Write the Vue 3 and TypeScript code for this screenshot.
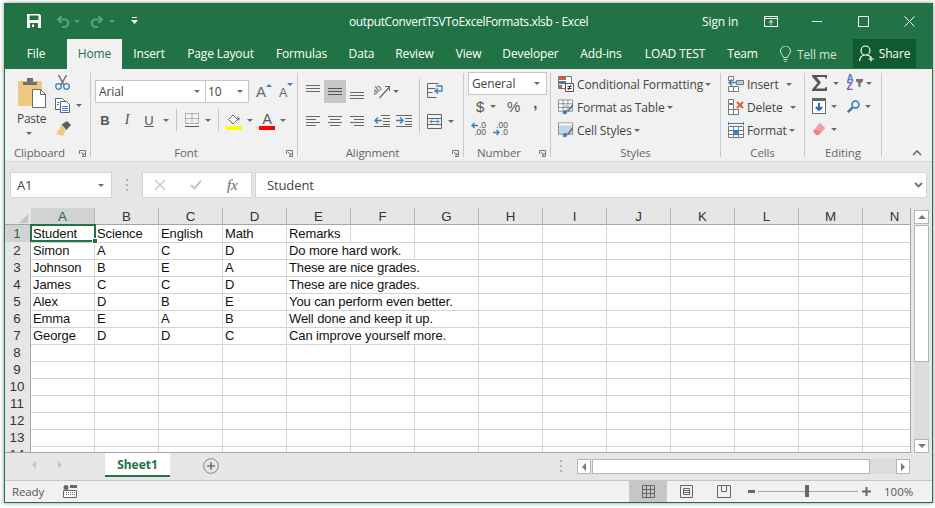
<script setup lang="ts">
interface Tab { name: string; w: number; active?: boolean }
const tabs: Tab[] = [
  { name: 'File', w: 62 }, { name: 'Home', w: 55, active: true }, { name: 'Insert', w: 54 },
  { name: 'Page Layout', w: 89 }, { name: 'Formulas', w: 73 }, { name: 'Data', w: 47 },
  { name: 'Review', w: 59 }, { name: 'View', w: 49 }, { name: 'Developer', w: 75 },
  { name: 'Add-ins', w: 66 }, { name: 'LOAD TEST', w: 82 }, { name: 'Team', w: 53 },
]
const columns = 'ABCDEFGHIJKLMN'.split('')
interface Cell { text: string; span: number }
const c = (text: string, span = 1): Cell => ({ text, span })
const data: Cell[][] = [
  [c('Student'), c('Science'), c('English'), c('Math'), c('Remarks')],
  [c('Simon'), c('A'), c('C'), c('D'), c('Do more hard work.', 2)],
  [c('Johnson'), c('B'), c('E'), c('A'), c('These are nice grades.', 3)],
  [c('James'), c('C'), c('C'), c('D'), c('These are nice grades.', 3)],
  [c('Alex'), c('D'), c('B'), c('E'), c('You can perform even better.', 3)],
  [c('Emma'), c('E'), c('A'), c('B'), c('Well done and keep it up.', 3)],
  [c('George'), c('D'), c('D'), c('C'), c('Can improve yourself more.', 3)],
]
const rows = Array.from({ length: 14 }, (_, i) => {
  const cells = data[i] ?? []
  const used = cells.reduce((n, x) => n + x.span, 0)
  return { n: i + 1, cells: [...cells, ...Array.from({ length: 14 - used }, () => c(''))] }
})
</script>

<template>
  <div class="page">
    <div class="win">
      <header class="title">
        <div class="qat">
          <svg class="save" width="14" height="14" viewBox="0 0 14 14"><path fill="#fff" fill-rule="evenodd" d="M0 0h12.500L14 1.500V14H0zM2.500 1.500v4.500h9V1.500zM3 9v5h8V9zM5 10.500h2V13H5z"/></svg>
          <svg class="undo" width="14" height="13" viewBox="0 0 14 13"><path fill="none" stroke="#5f9c7c" stroke-width="2.200" d="M2 4.500h6.500a3.600 3.600 0 0 1 0 7.500H6M5.500 1 2 4.500 5.500 8"/></svg>
          <i class="caret dim c-undo"></i>
          <svg class="redo" width="14" height="13" viewBox="0 0 14 13"><path fill="none" stroke="#5f9c7c" stroke-width="2.200" d="M12 4.500H5.500a3.600 3.600 0 0 0 0 7.500H8M8.500 1 12 4.500 8.500 8"/></svg>
          <i class="caret dim c-redo"></i>
          <svg class="custom" width="7" height="8" viewBox="0 0 7 8"><path fill="#fff" d="M1 0h5v1H1zM0 3h7L3.500 7z"/></svg>
        </div>
        <div class="doc">outputConvertTSVToExcelFormats.xlsb - Excel</div>
        <div class="winctl">
          <span class="signin">Sign in</span>
          <svg class="c-disp" width="14" height="11" viewBox="0 0 14 11"><path fill="none" stroke="#fff" d="M.5.500h13v10H.5zM.5 2.500h13M7 9V4.500M5 6.500l2-2 2 2"/></svg>
          <svg class="c-min" width="10" height="1" viewBox="0 0 10 1"><path fill="#fff" d="M0 0h10v1H0z"/></svg>
          <svg class="c-max" width="11" height="11" viewBox="0 0 11 11"><path fill="none" stroke="#fff" d="M.5.500h10v10H.5z"/></svg>
          <svg class="c-close" width="11" height="11" viewBox="0 0 11 11"><path fill="none" stroke="#fff" d="M.5.500l10 10M10.500.5l-10 10"/></svg>
        </div>
      </header>

      <nav class="tabs">
        <div v-for="t in tabs" :key="t.name" class="tab" :class="{ active: t.active }" :style="{ width: t.w + 'px' }">{{ t.name }}</div>
        <div class="tell">
          <svg width="11" height="16" viewBox="0 0 11 16"><path fill="none" stroke="#cfe3d8" d="M3.500 11.500C3 9 .5 8 .5 5a5 5 0 0 1 10 0c0 3-2.500 4-3 6.500zM3.500 13.500h4M4.500 15.500h2"/></svg>
          <span>Tell me</span>
        </div>
        <div class="share">
          <svg width="16" height="17" viewBox="0 0 16 17"><path fill="none" stroke="#fff" stroke-width="1.200" d="M.5 16c.5-4 2.500-6 6-6s5 1.500 5.500 3M6.500 10a4.200 4.200 0 1 0 0-9 4.200 4.200 0 0 0 0 9zM12 11.500v5M9.500 14h5.500"/></svg>
          <span>Share</span>
        </div>
      </nav>

      <section class="ribbon">
        <div class="group g-clip">
          <div class="body clip">
            <div class="paste">
              <svg width="29" height="30" viewBox="0 0 29 30">
                <rect x="0" y="3" width="24" height="25" rx="1.500" fill="#efc77e"/>
                <path fill="#6f6f6f" d="M5 4h14v3H5zM9 0h6v4H9z"/>
                <path fill="#fff" stroke="#6a6a6a" d="M14.500 11.500h8l5 5v13h-13z"/>
                <path fill="none" stroke="#6a6a6a" d="M22.500 11.500v5h5"/>
              </svg>
              <span>Paste</span>
              <i class="caret"></i>
            </div>
            <div class="clip-side">
              <svg width="15" height="15" viewBox="0 0 15 15">
                <path stroke="#707070" stroke-width="1.500" fill="none" d="M3.500 0l5.500 10M11.500 0L6 10"/>
                <circle cx="3.500" cy="11.500" r="2.800" fill="none" stroke="#3f7fc0" stroke-width="1.300"/>
                <circle cx="11.500" cy="11.500" r="2.800" fill="none" stroke="#3f7fc0" stroke-width="1.300"/>
              </svg>
              <div class="copyrow">
                <svg width="15" height="15" viewBox="0 0 15 15">
                  <path fill="#fff" stroke="#666" d="M.5.500h7l2 2v9h-9z"/>
                  <path fill="#fff" stroke="#666" d="M5.500 3.500h6l3 3v8h-9z"/>
                  <path stroke="#3f7fc0" d="M7 8.500h6M7 10.500h6M7 12.500h6M2 4.500h2M2 6.500h2"/>
                </svg>
                <i class="caret"></i>
              </div>
              <svg width="16" height="15" viewBox="0 0 16 15">
                <path fill="#efc77e" d="M6 4l5 5-3 6-8-2 3-1-1-2 2-1z"/>
                <path fill="#5f5f5f" d="M6.500 3.500 12 0l4 4-4.500 5z"/>
              </svg>
            </div>
          </div>
          <div class="label"><span>Clipboard</span><svg class="launch" width="7" height="7" viewBox="0 0 7 7"><path fill="none" stroke="#777" d="M.5 4V.5h6v6H3M2 2l3 3M5 3v2H3"/></svg></div>
        </div>

        <div class="group g-font">
          <div class="body font">
            <div class="font-row1">
              <div class="combo fname"><span>Arial</span><i class="caret"></i></div>
              <div class="combo fsize"><span>10</span><i class="caret"></i></div>
              <div class="grow"><span class="bigA">A</span><svg width="6" height="3" viewBox="0 0 6 3"><path fill="#3f7fc0" d="M0 3l3-3 3 3z"/></svg></div>
              <div class="shrink"><span class="smA">A</span><svg width="6" height="3" viewBox="0 0 6 3"><path fill="#3f7fc0" d="M0 0h6L3 3z"/></svg></div>
            </div>
            <div class="font-row2">
              <b class="fmt f-b">B</b>
              <i class="fmt f-i">I</i>
              <u class="fmt f-u">U</u>
              <i class="caret k1"></i>
              <span class="vsep s1"></span>
              <svg class="f-bord" width="14" height="14" viewBox="0 0 14 14"><path fill="none" stroke="#777" stroke-dasharray="1 1" d="M.5.500h13v10H.5zM7 .5v10M.5 5.500h13"/><path stroke="#555" d="M0 13.500h14"/></svg>
              <i class="caret k2"></i>
              <span class="vsep s2"></span>
              <svg class="f-fill" width="16" height="18" viewBox="0 0 16 18">
                <path fill="#fff" stroke="#666" d="M2.500 7.500 7 3l4.500 4.500L7 12z"/>
                <path fill="#3f7fc0" d="M11 4l3 3-2 2z"/>
                <path fill="#ffff00" d="M0 14h16v4H0z"/>
              </svg>
              <i class="caret k3"></i>
              <div class="f-color"><span>A</span><i class="bar"></i></div>
              <i class="caret k4"></i>
            </div>
          </div>
          <div class="label"><span>Font</span><svg class="launch" width="7" height="7" viewBox="0 0 7 7"><path fill="none" stroke="#777" d="M.5 4V.5h6v6H3M2 2l3 3M5 3v2H3"/></svg></div>
        </div>

        <div class="group g-align">
          <div class="body align">
            <div class="al-main">
              <div class="al-row top">
                <svg class="li" width="14" height="7" viewBox="0 0 14 7"><path stroke="#666" d="M0 .5h14M0 3.500h14M0 6.500h14"/></svg>
                <div class="sel"><svg width="14" height="7" viewBox="0 0 14 7"><path stroke="#555" d="M0 .5h14M0 3.500h14M0 6.500h14"/></svg></div>
                <svg class="li low" width="14" height="7" viewBox="0 0 14 7"><path stroke="#666" d="M0 .5h14M0 3.500h14M0 6.500h14"/></svg>
                <svg class="orient" width="16" height="15" viewBox="0 0 16 15">
                  <text x="0" y="10" transform="rotate(-40 2 10)" class="ab">ab</text>
                  <path fill="none" stroke="#666" stroke-width="1.200" d="M5.500 14 15 3.500M11 2.500h4.500V7"/>
                </svg>
                <i class="caret"></i>
              </div>
              <div class="al-row bottom">
                <svg class="li" width="14" height="11" viewBox="0 0 14 11"><path stroke="#666" d="M0 .5h14M0 3.500h10M0 6.500h14M0 9.500h10"/></svg>
                <svg class="li g8" width="14" height="11" viewBox="0 0 14 11"><path stroke="#666" d="M0 .5h14M2 3.500h10M0 6.500h14M2 9.500h10"/></svg>
                <svg class="li g8" width="14" height="11" viewBox="0 0 14 11"><path stroke="#666" d="M0 .5h14M4 3.500h10M0 6.500h14M4 9.500h10"/></svg>
                <svg class="ind" width="16" height="12" viewBox="0 0 16 12"><path stroke="#666" d="M7 .5h9M9 3.500h7M9 6.500h7M9 9.500h7M0 11.500h16"/><path stroke="#3f7fc0" stroke-width="1.500" fill="none" d="M8 5.500H1M4 2.500l-3 3 3 3"/></svg>
                <svg class="ind g6" width="16" height="12" viewBox="0 0 16 12"><path stroke="#666" d="M0 .5h16M9 3.500h7M9 6.500h7M9 9.500h7M0 11.500h16"/><path stroke="#3f7fc0" stroke-width="1.500" fill="none" d="M0 5.500h7M4 2.500l3 3-3 3"/></svg>
              </div>
            </div>
            <span class="vsep al-sep"></span>
            <div class="al-side">
              <svg width="17" height="15" viewBox="0 0 17 15"><path fill="none" stroke="#666" d="M.5.500h11M.5 5.500h8M.5 9.500h5M.5 14.500h9"/><path fill="none" stroke="#666" d="M.5.500v14"/><path fill="none" stroke="#3f7fc0" stroke-width="1.300" d="M9 3h6v5H8M11 5.500 8 8l3 2.500"/></svg>
              <div class="merge">
                <svg width="15" height="15" viewBox="0 0 15 15"><path fill="none" stroke="#666" d="M.5.500h14v14H.5zM.5 4.500h14M.5 10.500h14"/><path fill="none" stroke="#3f7fc0" d="M3 7.500h9M5 5.500l-2 2 2 2M10 5.500l2 2-2 2"/></svg>
                <i class="caret"></i>
              </div>
            </div>
          </div>
          <div class="label"><span>Alignment</span><svg class="launch" width="7" height="7" viewBox="0 0 7 7"><path fill="none" stroke="#777" d="M.5 4V.5h6v6H3M2 2l3 3M5 3v2H3"/></svg></div>
        </div>

        <div class="group g-num">
          <div class="body num">
            <div class="combo nfmt"><span>General</span><i class="caret"></i></div>
            <div class="num-row r1">
              <span class="sym dollar">$</span><i class="caret"></i>
              <span class="sym pct">%</span>
              <span class="sym comma">,</span>
            </div>
            <div class="num-row dec">
              <div class="decbox"><span class="d1">.0</span><span class="d2">.00</span><svg width="7" height="7" viewBox="0 0 7 7"><path fill="none" stroke="#3f7fc0" stroke-width="1.400" d="M7 3.500H1M3.500 1 1 3.500 3.500 6"/></svg></div>
              <div class="decbox right"><span class="d1">.00</span><span class="d2">.0</span><svg width="7" height="7" viewBox="0 0 7 7"><path fill="none" stroke="#3f7fc0" stroke-width="1.400" d="M0 3.500h6M3.500 1 6 3.500 3.500 6"/></svg></div>
            </div>
          </div>
          <div class="label"><span>Number</span><svg class="launch" width="7" height="7" viewBox="0 0 7 7"><path fill="none" stroke="#777" d="M.5 4V.5h6v6H3M2 2l3 3M5 3v2H3"/></svg></div>
        </div>

        <div class="group g-styles">
          <div class="body stack">
            <div class="cmd">
              <svg width="16" height="16" viewBox="0 0 16 16">
                <path fill="#fff" stroke="#777" d="M.5.500h13v12H.5z"/>
                <path fill="#e0592a" d="M1 1h7v3H1z"/><path fill="#3f7fc0" d="M1 5h7v3H1z"/><path fill="#e0592a" d="M1 9h3v3H1z"/>
                <path fill="#fff" stroke="#555" d="M7.500 7.500h8v8h-8z"/><path stroke="#333" d="M9.500 10.500h4M9.500 12.500h4M10 14l3-5"/>
              </svg>
              <span>Conditional Formatting</span><i class="caret"></i>
            </div>
            <div class="cmd">
              <svg width="17" height="17" viewBox="0 0 17 17">
                <path fill="#fff" stroke="#888" d="M.5.500h15v12H.5zM.5 4.500h15M.5 8.500h15M5.500.5v12M10.500.5v12"/>
                <path fill="#c3d5e8" d="M6 5h4v3H6zM11 9h4v3h-4z"/>
                <path fill="#3f7fc0" d="M5 15c0-3 2-4 4-4l1 2c-1 3-3 3-5 2z"/><path fill="#666" d="M10 12l5-7 1 1-5 7z"/>
              </svg>
              <span>Format as Table</span><i class="caret"></i>
            </div>
            <div class="cmd">
              <svg width="17" height="17" viewBox="0 0 17 17">
                <path fill="#c3d5e8" stroke="#888" d="M.5.500h15v12H.5z"/>
                <path fill="#fff" d="M1 1h14v2H1z"/>
                <path fill="#3f7fc0" d="M5 15c0-3 2-4 4-4l1 2c-1 3-3 3-5 2z"/><path fill="#666" d="M10 12l5-7 1 1-5 7z"/>
              </svg>
              <span>Cell Styles</span><i class="caret"></i>
            </div>
          </div>
          <div class="label"><span>Styles</span></div>
        </div>

        <div class="group g-cells">
          <div class="body stack">
            <div class="cmd">
              <svg width="16" height="16" viewBox="0 0 16 16">
                <path fill="#fff" stroke="#777" d="M.5.500h5v4h-5zM.5 10.500h5v5h-5zM5.500 10.500h5v5h-5z"/>
                <path fill="#b9cde3" stroke="#777" d="M8.500 4.500h7v4h-7z"/>
                <path fill="none" stroke="#3f7fc0" stroke-width="1.500" d="M8 6.500H1M4 3.500l-3 3 3 3"/>
              </svg>
              <span>Insert</span><i class="caret c-ins"></i>
            </div>
            <div class="cmd">
              <svg width="16" height="16" viewBox="0 0 16 16">
                <path fill="#fff" stroke="#777" d="M.5.500h5v4h-5zM.5 5.500h5v5h-5zM.5 10.500h5v5h-5zM5.500 10.500h5v5h-5z"/>
                <path fill="none" stroke="#e0592a" stroke-width="1.800" d="M9 3l6 6M15 3l-6 6"/>
              </svg>
              <span>Delete</span><i class="caret c-del"></i>
            </div>
            <div class="cmd">
              <svg width="16" height="16" viewBox="0 0 16 16">
                <path fill="none" stroke="#3f7fc0" d="M.5 0v3M15.500 0v3M1 1.500h14"/>
                <path fill="#fff" stroke="#777" d="M.5 4.500h15v11H.5zM.5 8.500h15M.5 12.500h15M5.500 4.500v11M10.500 4.500v11"/>
                <path fill="#3f7fc0" d="M5 8h6v4H5z"/>
              </svg>
              <span>Format</span><i class="caret c-fmt"></i>
            </div>
          </div>
          <div class="label"><span>Cells</span></div>
        </div>

        <div class="group g-edit">
          <div class="body edit">
            <div class="ed-col">
              <div class="ed-item sigma">
                <svg width="16" height="16" viewBox="0 0 16 16"><path fill="#555" d="M0 0h15v3.500h-1.500L13 2H4.500L9 7.500 4 13.500h9l.6-1.500H15v4H0v-1.500L5.500 8 0 1.500z"/></svg>
                <i class="caret"></i>
              </div>
              <div class="ed-item">
                <svg width="14" height="16" viewBox="0 0 14 16"><path fill="#fff" stroke="#666" d="M.5.500h13v15H.5z"/><path fill="#666" d="M0 0h14v3H0z"/><path fill="none" stroke="#1f66b5" stroke-width="2" d="M7 5v7M3.800 9 7 12l3.200-3"/></svg>
                <i class="caret"></i>
              </div>
              <div class="ed-item">
                <svg width="14" height="14" viewBox="0 0 14 14"><path fill="#e8828f" d="M8 1l5 5-6 7H4L1 9.500z"/><path fill="#f4b6bd" d="M3 7.500 8 1l5 5-5 4z" opacity=".5"/></svg>
                <i class="caret"></i>
              </div>
            </div>
            <div class="ed-col">
              <div class="ed-item sortitem">
                <div class="az"><span class="a">A</span><span class="z">Z</span></div>
                <svg width="7" height="8" viewBox="0 0 7 8"><path fill="#707070" d="M0 0h7v2L4.500 4.500V8h-2V4.500L0 2z"/></svg>
                <i class="caret"></i>
              </div>
              <div class="ed-item">
                <svg width="13" height="13" viewBox="0 0 13 13"><circle cx="8.500" cy="4.500" r="3.500" fill="none" stroke="#2f74bb" stroke-width="1.500"/><path stroke="#2f74bb" stroke-width="2.400" d="M5.500 7.500.8 12.200"/></svg>
                <i class="caret"></i>
              </div>
            </div>
          </div>
          <div class="label"><span>Editing</span></div>
        </div>

        <div class="collapse"><svg width="10" height="6" viewBox="0 0 10 6"><path fill="none" stroke="#666" stroke-width="1.600" d="M1 5l4-4 4 4"/></svg></div>
      </section>

      <section class="fbar">
        <div class="namebox"><span>A1</span><i class="caret"></i></div>
        <div class="dots"><i></i><i></i><i></i></div>
        <div class="fbtns">
          <svg width="10" height="10" viewBox="0 0 10 10"><path fill="none" stroke="#c6c6c6" stroke-width="1.300" d="M0 0l10 10M10 0 0 10"/></svg>
          <svg width="12" height="10" viewBox="0 0 12 10"><path fill="none" stroke="#c6c6c6" stroke-width="2" d="M1 5l3.500 3.500L11 .5"/></svg>
          <span class="fx">fx</span>
        </div>
        <div class="finput"><span>Student</span><svg width="9" height="6" viewBox="0 0 9 6"><path fill="none" stroke="#707070" stroke-width="1.800" d="M1 1l3.500 3.500L8 1"/></svg></div>
      </section>

      <section class="sheetwrap">
        <div class="sheet">
          <div class="colhead">
            <div class="corner"><svg width="9" height="9" viewBox="0 0 9 9"><path fill="#c6c6c6" d="M9 0v9H0z"/></svg></div>
            <div v-for="(l, i) in columns" :key="l" class="ch" :class="{ on: i === 0 }">{{ l }}</div>
          </div>
          <div v-for="r in rows" :key="r.n" class="row">
            <div class="rh" :class="{ on: r.n === 1 }">{{ r.n }}</div>
            <div v-for="(cell, i) in r.cells" :key="i" class="cell" :style="{ gridColumn: 'span ' + cell.span }">{{ cell.text }}</div>
          </div>
          <div class="cursor"><i></i></div>
        </div>
        <div class="vscroll">
          <div class="sbtn"><i class="tri up"></i></div>
          <div class="thumb"></div>
          <div class="strack"></div>
          <div class="sbtn"><i class="tri down"></i></div>
        </div>
      </section>

      <section class="tabbar">
        <div class="navs"><i class="tl"></i><i class="tr"></i></div>
        <div class="sheettab">Sheet1</div>
        <svg class="addsheet" width="16" height="16" viewBox="0 0 17 17"><circle cx="8.500" cy="8.500" r="7.800" fill="none" stroke="#808080"/><path stroke="#707070" stroke-width="1.600" d="M8.500 4.500v8M4.500 8.500h8"/></svg>
        <div class="dots hdots"><i></i><i></i><i></i></div>
        <div class="hscroll">
          <div class="hbtn"><i class="tl dark"></i></div>
          <div class="hthumb"></div>
          <div class="htrack"></div>
          <div class="hbtn"><i class="tr dark"></i></div>
        </div>
      </section>

      <footer class="status">
        <span class="ready">Ready</span>
        <svg class="macro" width="14" height="13" viewBox="0 0 14 13"><circle cx="3" cy="2.500" r="2.500" fill="#666"/><path fill="#fff" stroke="#666" d="M.5 5.500h13v7H.5z"/><path fill="#666" d="M7 0h7v3H7z"/><path stroke="#666" stroke-dasharray="1 1" d="M3 7.500h9M3 9.500h9"/></svg>
        <div class="spacer"></div>
        <div class="view on"><svg width="13" height="13" viewBox="0 0 13 13"><path fill="none" stroke="#666" d="M.5.500h12v12H.5zM.5 4.500h12M.5 8.500h12M4.500.5v12M8.500.5v12"/></svg></div>
        <div class="view"><svg width="13" height="13" viewBox="0 0 13 13"><path fill="none" stroke="#666" d="M.5.500h12v12H.5zM3.500 3.500h6v6h-6zM4 5.500h5M4 7.500h5"/></svg></div>
        <div class="view"><svg width="14" height="13" viewBox="0 0 14 13"><path fill="none" stroke="#666" d="M.5.500h13v12H.5zM4.500.5v6h5V.5"/></svg></div>
        <div class="zoomctl">
          <svg width="7" height="3" viewBox="0 0 7 3"><path fill="#666" d="M0 0h7v3H0z"/></svg>
          <div class="slider"><i></i></div>
          <svg width="9" height="9" viewBox="0 0 9 9"><path fill="#666" d="M3.500 0h2v3.500H9v2H5.500V9h-2V5.500H0v-2h3.500z"/></svg>
        </div>
        <span class="pctz">100%</span>
      </footer>
    </div>
  </div>
</template>

<style>
html, body { margin: 0; background: #fff; overflow: hidden; }
</style>

<style scoped>
.page { width: 935px; height: 508px; padding: 3px 2px 5px 4px; box-sizing: border-box; font-family: "Open Sans", "Noto Sans", sans-serif; font-size: 12px; color: #444; letter-spacing: -.12px; }
.win { width: 929px; height: 500px; box-sizing: border-box; border: 1px solid #217346; border-top: 0; display: flex; flex-direction: column; background: #e6e6e6; box-shadow: 0 0 4px rgba(0,0,0,.45); overflow: hidden; }
.caret { display: inline-block; width: 0; height: 0; border: 3.500px solid transparent; border-top: 3.500px solid #6a6a6a; border-bottom: 0; flex: none; font-style: normal; }
.caret.dim { border-top-color: #5f9c7c; }

.title { height: 36px; background: #217346; display: grid; grid-template-columns: 1fr auto 1fr; align-items: center; color: #fff; flex: none; }
.qat { display: flex; align-items: center; }
.save { margin-left: 22px; }
.undo { margin-left: 15px; }
.c-undo { margin-left: 4px; }
.redo { margin-left: 10px; }
.c-redo { margin-left: 5px; }
.custom { margin-left: 16px; }
.doc { font-size: 12px; letter-spacing: -.36px; white-space: nowrap; }
.winctl { display: flex; align-items: center; justify-content: flex-start; padding-left: 114px; }
.signin { width: 62px; flex: none; }
.c-disp { margin-right: 34px; }
.c-min { margin-right: 36px; }
.c-max { margin-right: 35px; }

.tabs { height: 30px; background: #217346; display: flex; color: #fff; flex: none; }
.tab { display: flex; align-items: center; justify-content: center; flex: none; padding-bottom: 1px; box-sizing: border-box; white-space: nowrap; }
.tab.active { background: #f1f1f1; color: #217346; }
.tell { display: flex; align-items: center; gap: 6px; margin-left: 11px; color: #cfe3d8; width: 73px; flex: none; }
.share { width: 63px; height: 29px; background: #0f5a2e; display: flex; align-items: center; justify-content: center; gap: 4px; flex: none; }

.ribbon { height: 93px; box-sizing: border-box; background: #f1f1f1; border-bottom: 1px solid #d4d4d4; display: flex; flex: none; }
.group { margin: 4px 0; height: 84px; border-right: 1px solid #c9c9c9; display: flex; flex-direction: column; box-sizing: border-box; flex: none; }
.g-clip { width: 86px; } .g-font { width: 207px; } .g-align { width: 166px; } .g-num { width: 87px; }
.g-styles { width: 170px; } .g-cells { width: 84px; } .g-edit { width: 77px; }
.body { flex: 1; min-height: 0; }
.label { height: 8px; line-height: 8px; display: flex; align-items: center; color: #666; font-size: 11.500px; flex: none; }
.label span { flex: 1; text-align: center; }
.launch { margin: 0 4px 0 5px; flex: none; }

.clip { display: flex; padding-left: 12px; }
.paste { width: 31px; display: flex; flex-direction: column; align-items: flex-start; margin-top: 5px; }
.paste svg { margin-left: 1px; }
.paste span { line-height: 16px; margin-top: 3px; color: #444; letter-spacing: -.3px; }
.paste .caret { margin: 5px 0 0 9px; }
.clip-side { display: flex; flex-direction: column; gap: 8px; margin: 2px 0 0 7px; }
.copyrow { display: flex; align-items: center; gap: 6px; height: 15px; }

.font { padding-left: 4px; }
.font-row1 { display: flex; align-items: center; margin-top: 7px; }
.combo { background: #fff; border: 1px solid #c6c6c6; box-sizing: border-box; display: flex; align-items: center; justify-content: space-between; height: 23px; font-size: 12px; color: #444; }
.fname { width: 111px; padding: 0 5px 0 3px; }
.fsize { width: 43px; padding: 0 5px 0 2px; border-left: 0; }
.grow, .shrink { display: flex; align-items: flex-start; font-family: "Liberation Sans", sans-serif; color: #666; line-height: 16px; }
.grow { margin-left: 7px; width: 18px; } .shrink { margin-left: 5px; }
.bigA { font-size: 15px; } .smA { font-size: 12.500px; margin-top: 2px; }
.font-row2 { display: flex; align-items: center; margin-top: 7px; height: 20px; }
.fmt { font-family: "Liberation Sans", sans-serif; font-size: 13px; color: #555; width: 22px; text-align: center; flex: none; }
.f-b { margin-left: -1px; }
.f-i { font-family: "Liberation Serif", serif; font-size: 14px; }
.f-u { width: 16px; margin-left: 3px; }
.k1 { margin-left: 6px; } .k2 { margin-left: 6px; } .k3 { margin-left: 5px; } .k4 { margin-left: 5px; }
.vsep { width: 1px; height: 22px; background: #c6c6c6; flex: none; display: block; }
.s1 { margin-left: 7px; } .f-bord { margin-left: 8px; flex: none; }
.s2 { margin-left: 7px; } .f-fill { margin: 2px 0 0 7px; flex: none; }
.f-color { width: 16px; margin: 2px 0 0 6px; display: flex; flex-direction: column; align-items: center; font-family: "Liberation Sans", sans-serif; font-size: 14px; color: #555; line-height: 14px; flex: none; }
.f-color .bar { width: 16px; height: 4px; background: #ff0000; display: block; }

.align { display: flex; padding-left: 8px; }
.al-main { width: 112px; flex: none; }
.al-row { display: flex; align-items: center; }
.al-row.top { height: 23px; margin-top: 7px; }
.sel { width: 22px; height: 23px; background: #c6c6c6; display: flex; align-items: center; justify-content: center; margin: 0 4px; flex: none; }
.li.low { margin-top: 8px; } .top > .li:first-child { margin-top: -6px; }
.orient { margin-left: 10px; } .orient + .caret { margin-left: 3px; }
.ab { font-family: "Liberation Sans", sans-serif; font-size: 9px; fill: #555; letter-spacing: 0; }
.al-row.bottom { margin-top: 12px; }
.g8 { margin-left: 8px; } .ind { margin-left: 10px; } .g6 { margin-left: 6px; }
.al-sep { height: 54px; margin: 6px 0 0 1px; }
.al-side { display: flex; flex-direction: column; margin: 10px 0 0 7px; }
.merge { display: flex; align-items: center; gap: 6px; margin-top: 16px; }

.num { padding-left: 4px; }
.nfmt { width: 79px; height: 23px; margin-top: -1px; padding: 0 6px 0 3px; }
.num-row { display: flex; align-items: center; height: 24px; }
.num-row.r1 { height: 22px; }
.sym { font-family: "Liberation Sans", sans-serif; color: #555; }
.dollar { font-size: 15px; margin-left: 8px; width: 14px; }
.pct { font-size: 15px; margin-left: 11px; }
.comma { font-size: 15px; font-weight: 700; margin-left: 13px; margin-top: -8px; }
.dec { gap: 7px; padding-left: 3px; }
.decbox { position: relative; width: 15px; height: 14px; font-family: "Liberation Sans", sans-serif; font-size: 8.500px; color: #555; display: flex; flex-direction: column; align-items: flex-end; letter-spacing: 0; }
.decbox span { display: block; height: 7px; line-height: 7px; }
.decbox svg { position: absolute; left: 0; top: 0; }
.decbox.right svg { top: 7px; left: 0; }

.stack { padding: 3px 0 0 7px; display: flex; flex-direction: column; gap: 7px; }
.cmd { height: 16px; display: flex; align-items: center; white-space: nowrap; color: #444; }
.cmd > span { margin-left: 3px; }
.cmd > svg { width: 16px; flex: none; }
.cmd > .caret { margin-left: 2px; }
.c-ins { margin-left: 7px !important; } .c-del { margin-left: 7px !important; }

.edit { display: flex; padding: 2px 0 0 7px; }
.ed-col { display: flex; flex-direction: column; gap: 7px; width: 35px; }
.ed-item { height: 16px; display: flex; align-items: center; gap: 5px; }
.az { display: flex; flex-direction: column; font-family: "Liberation Sans", sans-serif; font-size: 10px; line-height: 8px; font-weight: 700; width: 7px; letter-spacing: 0; }
.az .a { color: #3f7fc0; } .az .z { color: #8a4db0; }
.sortitem { gap: 2px; } .sortitem .caret { margin-left: 1px; }

.collapse { flex: 1; display: flex; align-items: flex-end; justify-content: flex-end; padding: 0 10px 5px 0; }

.fbar { height: 46px; display: flex; align-items: flex-start; padding-top: 10px; box-sizing: border-box; flex: none; }
.namebox { margin-left: 5px; width: 102px; height: 26px; box-sizing: border-box; background: #fff; border: 1px solid #d4d4d4; display: flex; align-items: center; justify-content: space-between; padding: 0 7px 0 6px; font-size: 13px; flex: none; }
.dots { display: flex; flex-direction: column; gap: 3px; width: 2px; margin: 7px 14px 0 14px; flex: none; }
.dots i { width: 2px; height: 2px; background: #b0b0b0; display: block; }
.fbtns { width: 110px; height: 26px; box-sizing: border-box; background: #fff; border: 1px solid #d4d4d4; display: flex; align-items: center; padding-left: 12px; gap: 25px; flex: none; }
.fx { font-family: "Liberation Serif", serif; font-style: italic; font-size: 15px; color: #666; }
.finput { margin-left: 3px; width: 672px; height: 26px; box-sizing: border-box; background: #fff; border: 1px solid #d4d4d4; display: flex; align-items: center; justify-content: space-between; padding: 0 3px 0 11px; font-size: 13px; flex: none; }

.sheetwrap { height: 245px; display: flex; flex: none; }
.sheet { position: relative; width: 906px; height: 245px; box-sizing: border-box; overflow: hidden; background: #fff; border-right: 1px solid #a5a5a5; border-bottom: 1px solid #a5a5a5; font-family: "Liberation Sans", Arial, sans-serif; font-size: 13.330px; color: #111; letter-spacing: 0; }
.colhead, .row { display: grid; grid-template-columns: 26px repeat(14, 64px); }
.colhead { height: 16px; background: #e6e6e6; border-bottom: 1px solid #a5a5a5; }
.corner { display: flex; align-items: flex-end; justify-content: flex-end; padding: 0 3px 2px 0; }
.ch { text-align: center; line-height: 17px; border-right: 1px solid #b5b5b5; box-sizing: border-box; color: #333; }
.ch.on { background: #d2d2d2; color: #1e6b40; }
.row { height: 17px; }
.rh { background: #e6e6e6; text-align: center; line-height: 17px; border-bottom: 1px solid #c6c6c6; border-right: 1px solid #a5a5a5; box-sizing: border-box; color: #333; padding-right: 1px; }
.rh.on { background: #d2d2d2; color: #1e6b40; }
.cell { border-right: 1px solid #d4d4d4; border-bottom: 1px solid #d4d4d4; box-sizing: border-box; padding-left: 2px; line-height: 17px; white-space: nowrap; overflow: hidden; font-size: 13px; letter-spacing: -.1px; }
.cursor { position: absolute; left: 25px; top: 16px; width: 66px; height: 18px; box-sizing: border-box; border: 2px solid #217346; }
.cursor i { position: absolute; right: -4px; bottom: -4px; width: 6px; height: 6px; box-sizing: border-box; background: #217346; border: 1px solid #fff; display: block; }

.vscroll { width: 15px; margin: 2px 0 0 3px; display: flex; flex-direction: column; height: 243px; flex: none; }
.sbtn { height: 14px; flex: none; background: #fff; border: 1px solid #b5b5b5; box-sizing: border-box; display: flex; align-items: center; justify-content: center; }
.thumb { height: 137px; margin-top: 1px; background: #fff; border: 1px solid #b5b5b5; box-sizing: border-box; flex: none; }
.strack { flex: 1; background: #dcdcdc; }
.tri { width: 0; height: 0; border: 4px solid transparent; display: block; }
.tri.up { border-top: 0; border-bottom: 4px solid #777; }
.tri.down { border-bottom: 0; border-top: 4px solid #777; }

.tabbar { height: 28px; display: flex; align-items: flex-start; border-bottom: 1px solid #c6c6c6; box-sizing: border-box; flex: none; }
.navs { display: flex; align-items: center; gap: 22px; margin: 8px 0 0 27px; width: 73px; flex: none; }
.tl { width: 0; height: 0; border: 4px solid transparent; border-left: 0; border-right: 4px solid #c6c6c6; display: block; }
.tr { width: 0; height: 0; border: 4px solid transparent; border-right: 0; border-left: 4px solid #c6c6c6; display: block; }
.tl.dark { border-right-color: #777; } .tr.dark { border-left-color: #777; }
.sheettab { width: 65px; height: 24px; background: #fff; border-bottom: 2px solid #217346; box-sizing: border-box; color: #217346; font-weight: 700; font-size: 12px; display: flex; align-items: center; justify-content: center; flex: none; letter-spacing: 0; }
.addsheet { margin: 5px 0 0 33px; flex: none; }
.hdots { margin: 7px 0 0 341px; }
.hscroll { display: flex; margin: 6px 0 0 15px; height: 15px; width: 333px; flex: none; }
.hbtn { width: 14px; height: 15px; background: #fff; border: 1px solid #b5b5b5; box-sizing: border-box; display: flex; align-items: center; justify-content: center; flex: none; }
.hthumb { width: 278px; margin-left: 1px; background: #fff; border: 1px solid #b5b5b5; box-sizing: border-box; flex: none; }
.htrack { flex: 1; background: #dcdcdc; }

.status { flex: 1; background: #f1f1f1; display: flex; align-items: center; color: #555; font-size: 11.500px; min-height: 0; }
.ready { margin-left: 7px; width: 51px; flex: none; }
.macro { flex: none; }
.spacer { flex: 1; }
.view { width: 38px; align-self: stretch; display: flex; align-items: center; justify-content: center; flex: none; }
.view.on { background: #c6c6c6; }
.zoomctl { display: flex; align-items: center; margin-left: 5px; flex: none; }
.slider { position: relative; width: 100px; height: 1px; background: #a5a5a5; margin: 0 4px 0 3px; }
.slider i { position: absolute; left: 47px; top: -6px; width: 4px; height: 12px; background: #666; display: block; }
.pctz { width: 61px; padding-left: 13px; box-sizing: border-box; flex: none; letter-spacing: 0; }
</style>
